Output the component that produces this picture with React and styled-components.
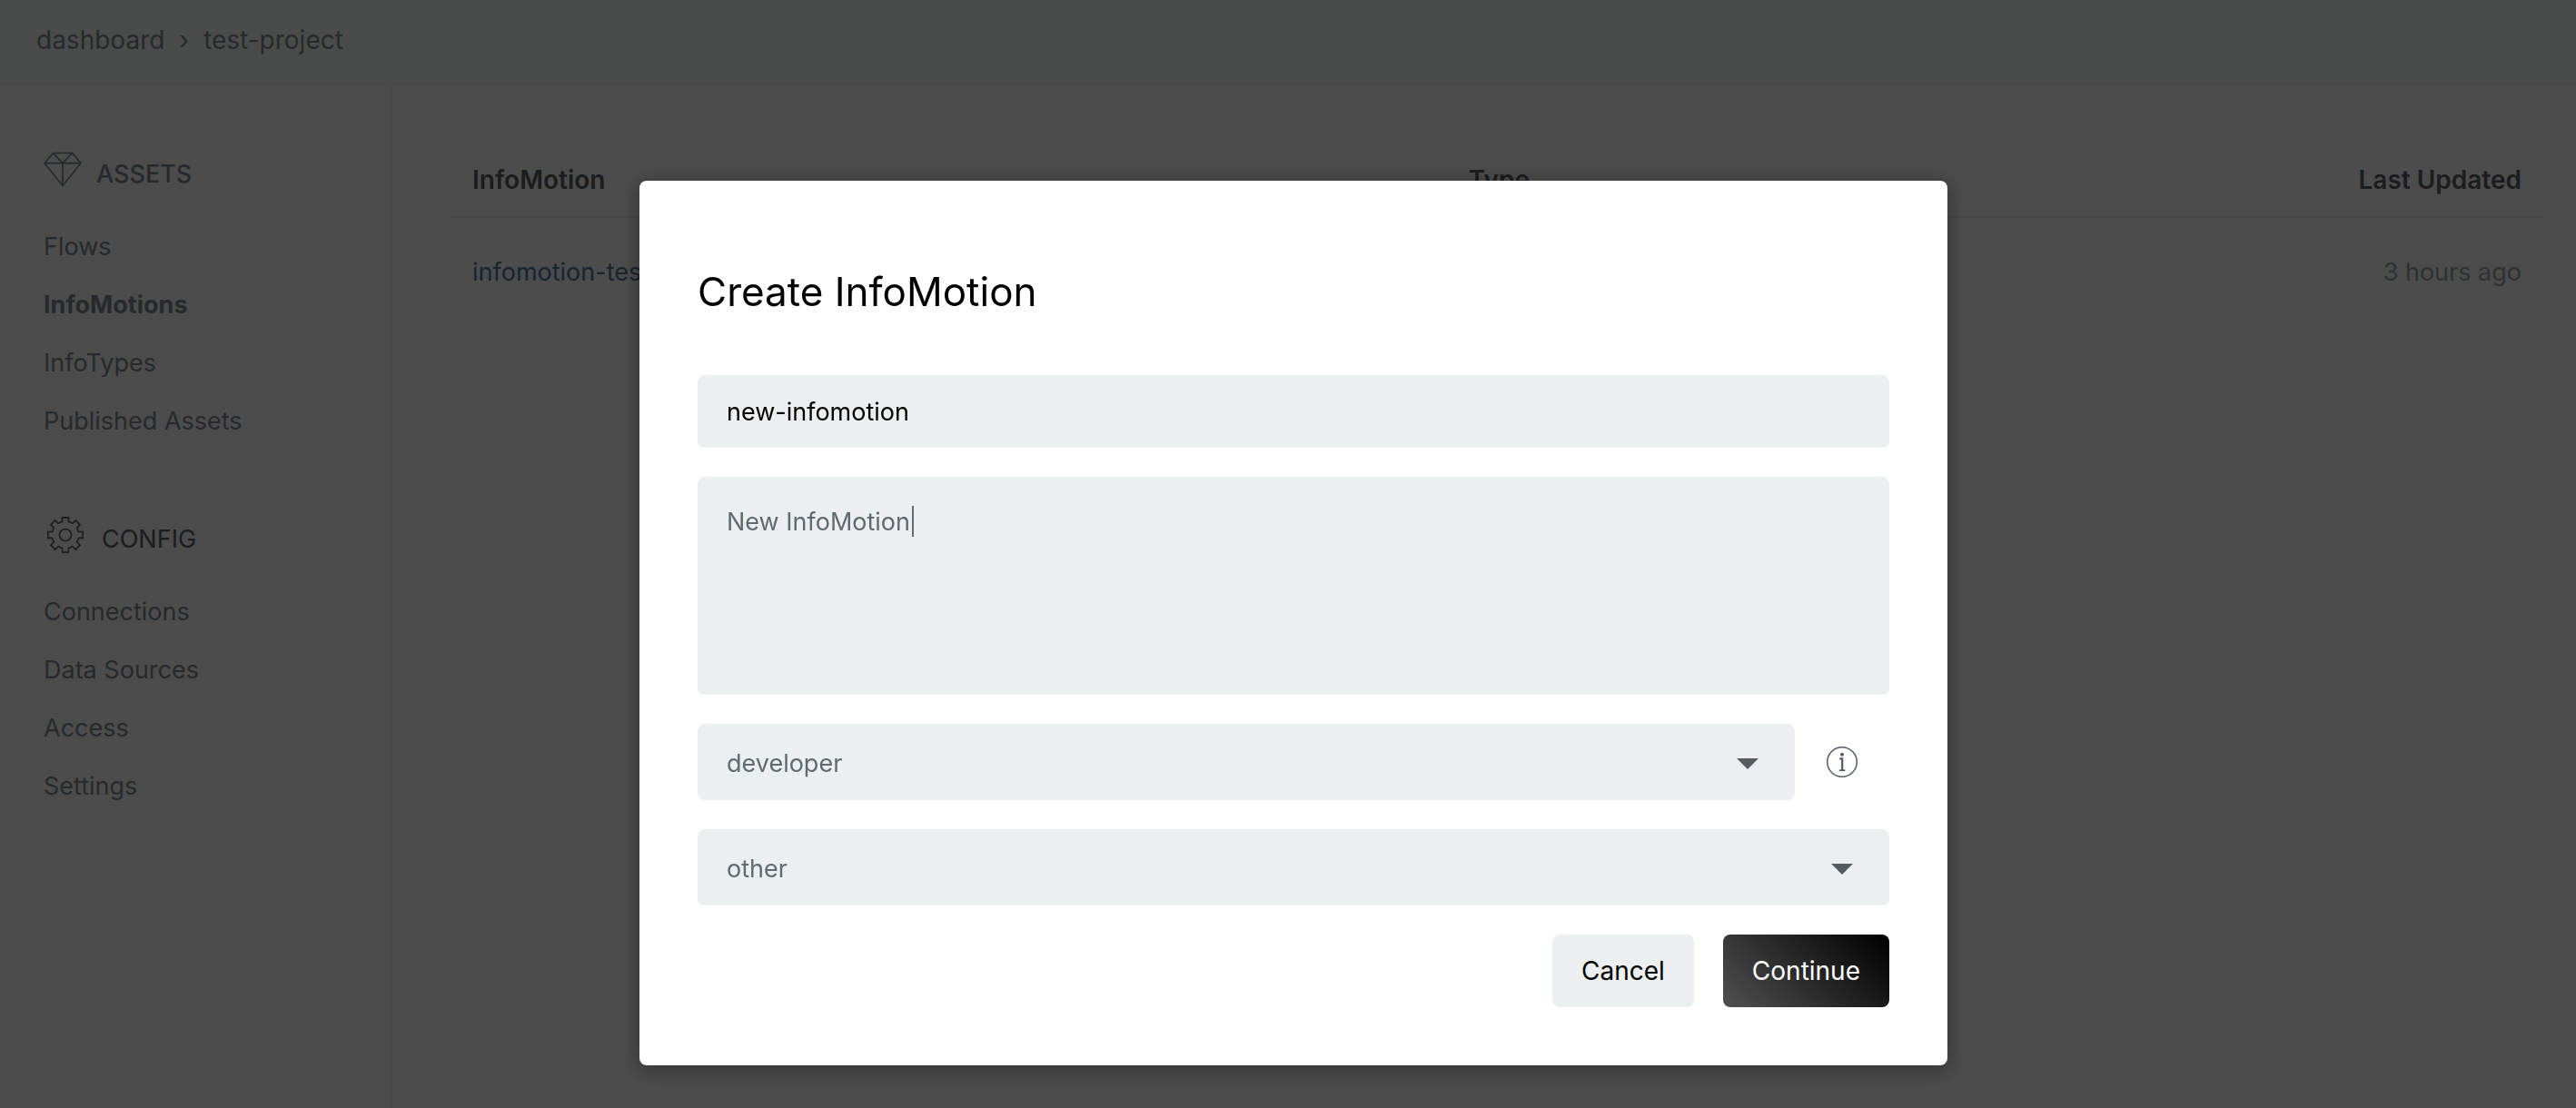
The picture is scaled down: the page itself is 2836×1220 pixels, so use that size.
import React from 'react';
import styled, { createGlobalStyle } from 'styled-components';

const GlobalStyle = createGlobalStyle`
  *, *::before, *::after { box-sizing: border-box; }
  body {
    margin: 0;
    background: #fff;
    color: #000;
    font-family: Inter, "Liberation Sans", sans-serif;
    font-size: 28px;
    line-height: 32px;
  }
  input, textarea, select, button { font: inherit; }
`;

const Page = styled.div`
  display: flex;
  flex-direction: column;
  min-height: 100vh;
`;

const Header = styled.header`
  display: flex;
  align-items: center;
  gap: 16px;
  padding: 28px 40px 32px;
  background: #f8fffb;
  border-bottom: 2px solid #f0f3f2;
`;

const Crumb = styled.a`
  color: #7f8c94;
  text-decoration: none;
`;

const Separator = styled.span`
  color: #7f8c94;
`;

const Body = styled.div`
  display: flex;
  flex: 1;
`;

const Sidebar = styled.nav`
  display: flex;
  flex-direction: column;
  flex: 0 0 432px;
  gap: 88px;
  padding: 72px 48px;
  border-right: 2px solid #f2f2f2;
  font-size: 27px;
`;

const SectionTitle = styled.h2`
  display: flex;
  align-items: flex-start;
  gap: 16px;
  margin: 0 0 48px;
  color: ${(p) => (p.$dark ? '#5c6266' : '#7f8c94')};
  font-size: 27px;
  font-weight: ${(p) => (p.$dark ? 400 : 500)};

  span { padding-top: 10px; }
`;

const Links = styled.ul`
  display: flex;
  flex-direction: column;
  gap: 32px;
  margin: 0;
  padding: 0;
  list-style: none;
`;

const NavLink = styled.a`
  display: block;
  color: #7f8c94;
  font-weight: ${(p) => (p.$active ? 700 : 400)};
  text-decoration: none;
`;

const Main = styled.main`
  flex: 1;
  padding: 72px 36px 72px 64px;
`;

const Table = styled.table`
  width: 100%;
  border-collapse: collapse;
  table-layout: fixed;
`;

const HeadCell = styled.th`
  width: ${(p) => p.$width || 'auto'};
  padding: 16px 24px 24px;
  border-bottom: 2px solid #f2f2f2;
  color: #5c6266;
  font-weight: 600;
  text-align: ${(p) => p.$align || 'left'};
`;

const Cell = styled.td`
  padding: 44px 24px 32px;
  color: #9aa7ae;
  font-size: 27px;
  text-align: ${(p) => p.$align || 'left'};
`;

const AssetLink = styled.a`
  color: #4d7ba5;
  text-decoration: none;
`;

const Overlay = styled.div`
  position: fixed;
  inset: 0;
  display: flex;
  align-items: flex-start;
  justify-content: center;
  padding: 199px 0 47px 12px;
  background: rgba(0, 0, 0, 0.7);
`;

const Dialog = styled.form`
  display: flex;
  flex-direction: column;
  gap: 32px;
  width: 1440px;
  max-width: 100%;
  padding: 64px;
  border-radius: 8px;
  background: #fff;
  box-shadow: 0 4px 24px rgba(0, 0, 0, 0.4);
  font-size: 27px;
`;

const DialogTitle = styled.h1`
  margin: 28px 0 30px;
  font-size: 44px;
  font-weight: 400;
  line-height: 60px;
`;

const NameInput = styled.input`
  width: 100%;
  height: 80px;
  padding: 0 32px;
  border: 0;
  border-radius: 8px;
  outline: 0;
  background: #ebeff0;
  color: #000;
`;

const TextField = styled.div`
  position: relative;
  display: flex;
`;

const Description = styled.textarea`
  flex: 1;
  height: 240px;
  padding: 32px;
  border: 0;
  border-radius: 8px;
  outline: 0;
  resize: none;
  background: #ebeff0;
  color: #606b70;
  caret-color: transparent;
  line-height: 36px;
`;

const Caret = styled.span`
  position: absolute;
  top: 32px;
  left: 236px;
  width: 2px;
  height: 34px;
  background: #606b70;
`;

const Row = styled.div`
  display: flex;
  align-items: center;
`;

const SelectBox = styled.div`
  position: relative;
  display: flex;
  flex: 1;
`;

const Select = styled.select`
  flex: 1;
  height: 84px;
  padding: 4px 80px 0 32px;
  appearance: none;
  border: 0;
  border-radius: 8px;
  outline: 0;
  background: #ebeff0;
  color: #606b70;
`;

const Arrow = styled.svg`
  position: absolute;
  top: 38px;
  right: 40px;
  pointer-events: none;
`;

const InfoButton = styled.button`
  display: flex;
  align-items: center;
  justify-content: center;
  width: 104px;
  padding: 0;
  border: 0;
  background: none;
  color: #545c60;
`;

const Actions = styled.div`
  display: flex;
  justify-content: flex-end;
  gap: 32px;
`;

const Button = styled.button`
  height: 80px;
  padding: 0 32px;
  border: 0;
  border-radius: 8px;
  background: ${(p) => (p.$primary ? 'linear-gradient(45deg, #505050, #000)' : '#ebeff0')};
  color: ${(p) => (p.$primary ? '#fff' : '#000')};
  font-size: 28px;
`;

const DiamondIcon = () => (
  <svg width="42" height="40" viewBox="0 0 42 40" fill="none" stroke="currentColor" strokeWidth="1.7" aria-hidden="true">
    <path d="M10.5 2.5h21L41 13.7 21 38.5 1 13.7zM1 13.7h40M10.5 2.5L21 13.7 31.5 2.5M21 13.7v24.5" />
  </svg>
);

const teeth = [0, 45, 90, 135, 180, 225, 270, 315];
const gearPath = (() => {
  const at = (angle, x, y) => {
    const r = (angle * Math.PI) / 180;
    return `${(24 + x * Math.cos(r) - y * Math.sin(r)).toFixed(2)} ${(21 + x * Math.sin(r) + y * Math.cos(r)).toFixed(2)}`;
  };
  const points = teeth.flatMap((a) => [at(a, -3.4, -14.6), at(a, -3.4, -19.2), at(a, 3.4, -19.2), at(a, 3.4, -14.6)]);
  return `M${points.join('L')}Z`;
})();

const GearIcon = () => (
  <svg width="48" height="42" viewBox="0 0 48 42" fill="none" stroke="currentColor" strokeWidth="1.7" aria-hidden="true">
    <path d={gearPath} />
    <circle cx="24" cy="21" r="6.5" />
  </svg>
);

const InfoIcon = () => (
  <svg width="36" height="36" viewBox="0 0 36 36" fill="none" stroke="currentColor" aria-hidden="true">
    <circle cx="18" cy="18" r="16.3" strokeWidth="1.5" />
    <circle cx="18" cy="9.8" r="2" fill="currentColor" stroke="none" />
    <path d="M15.2 14.4H18.2V27" strokeWidth="2.2" />
    <path d="M15 27.2h6.4" strokeWidth="1.7" />
  </svg>
);

const DownArrow = () => (
  <Arrow width="24" height="12" viewBox="0 0 24 12" fill="#545c60" aria-hidden="true">
    <path d="M0 0h24L12 12z" />
  </Arrow>
);

const assets = ['Flows', 'InfoMotions', 'InfoTypes', 'Published Assets'];
const config = ['Connections', 'Data Sources', 'Access', 'Settings'];

const NavSection = ({ icon, title, items, active, dark }) => (
  <section>
    <SectionTitle $dark={dark}>
      {icon}
      <span>{title}</span>
    </SectionTitle>
    <Links>
      {items.map((item) => (
        <li key={item}>
          <NavLink href="#" $active={item === active}>{item}</NavLink>
        </li>
      ))}
    </Links>
  </section>
);

export default function App() {
  return (
    <>
      <GlobalStyle />
      <Page>
        <Header>
          <Crumb href="#">dashboard</Crumb>
          <Separator>›</Separator>
          <Crumb href="#">test-project</Crumb>
        </Header>
        <Body>
          <Sidebar>
            <NavSection icon={<DiamondIcon />} title="ASSETS" items={assets} active="InfoMotions" />
            <NavSection icon={<GearIcon />} title="CONFIG" items={config} dark />
          </Sidebar>
          <Main>
            <Table>
              <thead>
                <tr>
                  <HeadCell $width="47.6%">InfoMotion</HeadCell>
                  <HeadCell>Type</HeadCell>
                  <HeadCell $align="right">Last Updated</HeadCell>
                </tr>
              </thead>
              <tbody>
                <tr>
                  <Cell><AssetLink href="#">infomotion-test</AssetLink></Cell>
                  <Cell />
                  <Cell $align="right">3 hours ago</Cell>
                </tr>
              </tbody>
            </Table>
          </Main>
        </Body>
      </Page>
      <Overlay>
        <Dialog role="dialog" aria-labelledby="dialog-title" onSubmit={(e) => e.preventDefault()}>
          <DialogTitle id="dialog-title">Create InfoMotion</DialogTitle>
          <NameInput aria-label="Name" defaultValue="new-infomotion" />
          <TextField>
            <Description aria-label="Description" defaultValue="New InfoMotion" />
            <Caret />
          </TextField>
          <Row>
            <SelectBox>
              <Select aria-label="Role" defaultValue="developer">
                <option>developer</option>
              </Select>
              <DownArrow />
            </SelectBox>
            <InfoButton type="button" aria-label="About roles"><InfoIcon /></InfoButton>
          </Row>
          <SelectBox>
            <Select aria-label="Category" defaultValue="other">
              <option>other</option>
            </Select>
            <DownArrow />
          </SelectBox>
          <Actions>
            <Button type="button">Cancel</Button>
            <Button type="submit" $primary>Continue</Button>
          </Actions>
        </Dialog>
      </Overlay>
    </>
  );
}
